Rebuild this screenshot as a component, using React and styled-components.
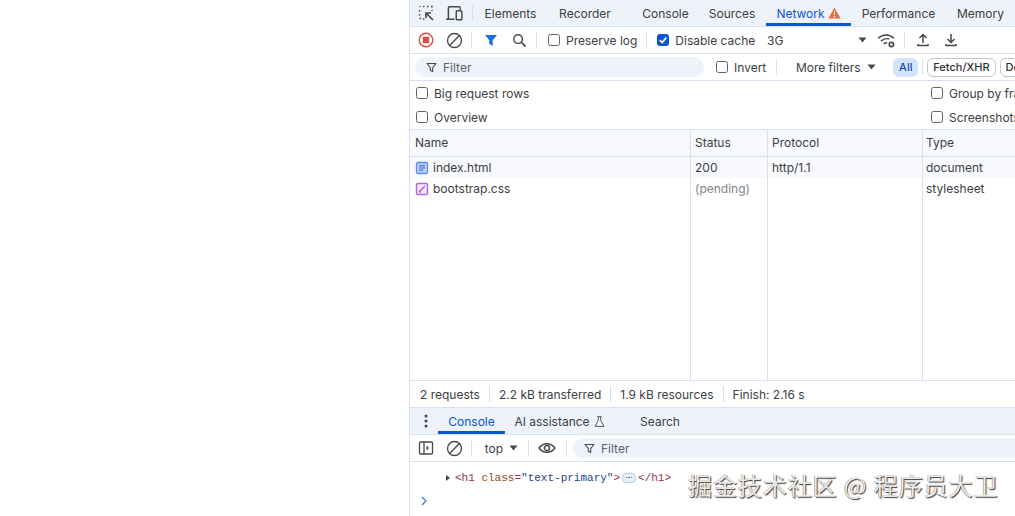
import styled, { createGlobalStyle } from 'styled-components';

const GlobalStyle = createGlobalStyle`
    html, body {
        margin: 0;
        padding: 0;
        height: 100%;
        background: #fff;
        overflow: hidden;
    }
    * {
        box-sizing: border-box;
    }
`;

const line = '#d6e0f0';
const tint = '#edf2fb';
const ink = '#3c4043';

const Page = styled.div`
    width: 1015px;
    height: 516px;
    display: flex;
    justify-content: flex-end;
    font-family: Inter, "Liberation Sans", sans-serif;
    font-size: 12px;
    color: ${ink};
    overflow: hidden;
    position: relative;
`;

const Devtools = styled.div`
    width: 606px;
    flex: none;
    height: 100%;
    border-left: 1px solid ${line};
    display: flex;
    flex-direction: column;
    overflow: hidden;
`;

const Bar = styled.div`
    flex: none;
    height: ${p => p.$h || 27}px;
    display: flex;
    align-items: center;
    background: ${p => p.$tint ? tint : '#fff'};
    border-bottom: 1px solid ${line};
    padding-left: ${p => p.$pad || 0}px;
    white-space: nowrap;
`;

const Tab = styled.div`
    flex: none;
    height: 100%;
    margin-left: ${p => p.$ml || 0}px;
    width: ${p => p.$w}px;
    display: flex;
    align-items: center;
    justify-content: center;
    gap: 3px;
    color: ${p => p.$active ? '#0b57d0' : ink};
    border-bottom: ${p => p.$active ? '3px solid #0b57d0' : '0'};
    padding-top: ${p => p.$active ? '3px' : '0'};
    border-radius: 0 0 1px 1px;
`;

const Sep = styled.div`
    flex: none;
    width: 1px;
    height: 16px;
    background: ${line};
    margin: 0 ${p => p.$m ?? 6}px 0 ${p => p.$ml ?? p.$m ?? 6}px;
`;

const IconSlot = styled.span`
    flex: none;
    width: 20px;
    height: 20px;
    margin-left: ${p => p.$ml || 0}px;
    display: flex;
    align-items: center;
    justify-content: center;
`;

const Check = styled.span`
    flex: none;
    width: 12px;
    height: 12px;
    border-radius: 2.5px;
    border: 1px solid ${p => p.$on ? '#0b57d0' : '#5f6368'};
    background: ${p => p.$on ? '#0b57d0' : '#fff'};
    display: flex;
    align-items: center;
    justify-content: center;
`;

const CheckLabel = styled.label`
    display: flex;
    align-items: center;
    gap: 6px;
    flex: none;
    margin-left: ${p => p.$ml || 0}px;
`;

const FilterPill = styled.div`
    flex: none;
    width: ${p => p.$w}px;
    height: 20px;
    margin-left: ${p => p.$ml}px;
    border-radius: ${p => p.$open ? '10px 0 0 10px' : '10px'};
    background: ${tint};
    display: flex;
    align-items: center;
    gap: ${p => p.$gap}px;
    padding-left: ${p => p.$pl}px;
    color: #5f6368;
`;

const Chip = styled.div`
    flex: none;
    height: 19px;
    width: ${p => p.$w ? `${p.$w}px` : 'auto'};
    padding: 0 5px;
    margin-left: ${p => p.$ml || 0}px;
    border-radius: 6px;
    display: flex;
    align-items: center;
    justify-content: center;
    font-size: 11px;
    font-weight: 500;
    border: 1px solid ${p => p.$on ? '#d3e3fd' : '#c4c7c5'};
    background: ${p => p.$on ? '#d3e3fd' : '#fff'};
    color: ${p => p.$on ? '#174ea6' : '#303134'};
`;

const Settings = styled.div`
    flex: none;
    height: 49px;
    display: grid;
    grid-template-columns: 521px 1fr;
    grid-template-rows: 24px 24px;
    align-items: center;
    padding: 0 0 0 6px;
    border-bottom: 1px solid ${line};
    white-space: nowrap;
`;

const Grid = styled.div`
    flex: 1;
    min-height: 0;
    display: grid;
    grid-template-columns: 281px 77px 155px 1fr;
    grid-template-rows: 27px 21px 21px 1fr;
    background: #fff;
`;

const Cell = styled.div`
    display: flex;
    align-items: center;
    gap: 4px;
    padding-left: ${p => p.$first ? 5 : p.$last ? 3 : 4}px;
    padding-bottom: ${p => p.$head ? 1 : 0}px;
    border-right: ${p => p.$last ? '0' : `1px solid ${line}`};
    background: ${p => p.$head ? '#f7f9fd' : p.$shade ? '#f8f9fc' : '#fff'};
    border-bottom: ${p => p.$head ? `1px solid ${line}` : '0'};
    color: ${p => p.$muted ? '#80868b' : ink};
    white-space: nowrap;
`;

const StatusBar = styled.div`
    flex: none;
    height: 28px;
    display: flex;
    align-items: center;
    border-top: 1px solid ${line};
    border-bottom: 1px solid ${line};
    padding-left: 10px;
    white-space: nowrap;
`;

const ConsoleBody = styled.div`
    flex: none;
    height: 54px;
    padding: 8px 0 0 36px;
`;

const LogLine = styled.div`
    display: flex;
    align-items: center;
    height: 15px;
    font-family: "Liberation Mono", monospace;
    font-size: 11px;
    white-space: pre;
    color: #8e2f4c;
`;

const Arrow = styled.span`
    width: 0;
    height: 0;
    margin-right: 5px;
    border-left: 4px solid #474747;
    border-top: 3.5px solid transparent;
    border-bottom: 3.5px solid transparent;
`;

const Attr = styled.span`
    color: ${p => p.$value ? '#1b3f8b' : '#8a4b1f'};
`;

const Dots = styled.span`
    width: 14px;
    height: 10px;
    margin: 0 2px 0 2px;
    border-radius: 4px;
    border: 1px solid #b9cce8;
    background: #e8effa;
    display: flex;
    align-items: center;
    justify-content: center;
    gap: 1px;

    i {
        width: 1.5px;
        height: 1.5px;
        background: #2f4f78;
        border-radius: 50%;
    }
`;

const Prompt = styled.div`
    margin: 9px 0 0 -26px;
    height: 14px;
    display: flex;
    align-items: center;
`;

const Watermark = styled.div`
    position: absolute;
    left: 688px;
    top: 469px;
    font-family: "Noto Sans CJK SC", sans-serif;
    font-size: 24px;
    line-height: 32px;
    letter-spacing: 0.92px;
    color: rgba(255, 255, 255, 0.9);
    text-shadow: 1px 1px 1px rgba(40, 40, 40, 0.9), -0.5px -0.5px 0.5px rgba(70, 70, 70, 0.7);
    white-space: nowrap;
`;

const Svg = ({ size = 16, children, ...rest }) => (
    <svg width={size} height={size} viewBox="0 0 16 16" fill="none" stroke="#474747" strokeWidth="1.3" {...rest}>
        {children}
    </svg>
);

const FunnelOutline = () => (
    <Svg size={13}>
        <path d="M2.5 3h11L9.5 8v5l-3-1.5V8z" strokeLinejoin="round" />
    </Svg>
);

const CheckBox = ({ on }) => (
    <Check $on={on}>
        {on && (
            <svg width="10" height="10" viewBox="0 0 10 10" fill="none" stroke="#fff" strokeWidth="1.7">
                <path d="M1.8 5.2 4.1 7.5 8.3 2.6" />
            </svg>
        )}
    </Check>
);

const Clear = () => (
    <Svg size={17}>
        <circle cx="8" cy="8" r="6.6" />
        <path d="M3.4 12.6 12.6 3.4" />
    </Svg>
);

const Caret = () => (
    <svg width="9" height="6" viewBox="0 0 9 6"><path d="M0.5 0.5h8L4.5 5.5z" fill="#474747" /></svg>
);

const App = () => {
    return (
        <Page>
            <GlobalStyle />
            <Devtools>
                <Bar $tint $pad={6}>
                    <IconSlot>
                        <Svg>
                            <path d="M1.5 1.5h1M5 1.5h1.5M9 1.5h1.500M13 1.500h1v1M1.500 5v1.500M1.500 9v1.500M14 5v1M1.500 13.500h1v.5M5 14h1.500" strokeWidth="1.400" />
                            <path d="M15 15 9 9M8 13V8h5" strokeWidth="1.700" />
                        </Svg>
                    </IconSlot>
                    <IconSlot $ml={8}>
                        <Svg size={18}>
                            <path d="M1 13.500h7.500M3 13V3.500a1 1 0 0 1 1-1h8.500a1 1 0 0 1 1 1V5" />
                            <rect x="10" y="6" width="5" height="8" rx="1" />
                        </Svg>
                    </IconSlot>
                    <Sep $ml={8} $m={0} />
                    <Tab $w={75}>Elements</Tab>
                    <Tab $w={80} $ml={-3}>Recorder</Tab>
                    <Tab $w={83} $ml={-1}>Console</Tab>
                    <Tab $w={50}>Sources</Tab>
                    <Tab $w={85} $ml={9} $active>
                        Network
                        <svg width="13" height="12" viewBox="0 0 13 12">
                            <path d="M6.500 0.500 12.700 11.500H0.300z" fill="#e8703a" />
                            <path d="M6.500 4v4M6.500 9v1.300" stroke="#fff" strokeWidth="1.100" />
                        </svg>
                    </Tab>
                    <Tab $w={75} $ml={10}>Performance</Tab>
                    <Tab $w={47} $ml={21}>Memory</Tab>
                </Bar>
                <Bar $pad={6}>
                    <IconSlot>
                        <svg width="16" height="16" viewBox="0 0 16 16">
                            <circle cx="8" cy="8" r="6.800" fill="none" stroke="#d9503f" strokeWidth="1.400" />
                            <rect x="4.800" y="4.800" width="6.400" height="6.400" rx="1" fill="#d9503f" />
                        </svg>
                    </IconSlot>
                    <IconSlot $ml={8}><Clear /></IconSlot>
                    <Sep $ml={7} $m={0} />
                    <IconSlot $ml={9}>
                        <svg width="14" height="14" viewBox="0 0 14 14"><path d="M1 2h12L8.700 7.300V13L5.300 10.800V7.300z" fill="#1a6fe0" /></svg>
                    </IconSlot>
                    <IconSlot $ml={8}>
                        <Svg size={15}>
                            <circle cx="6.500" cy="6.500" r="4.600" strokeWidth="1.500" />
                            <path d="M10 10l4.500 4.500" strokeWidth="1.700" />
                        </Svg>
                    </IconSlot>
                    <Sep $ml={7} $m={0} />
                    <CheckLabel $ml={11}><CheckBox />Preserve log</CheckLabel>
                    <Sep $ml={9} $m={0} />
                    <CheckLabel $ml={10}><CheckBox on />Disable cache</CheckLabel>
                    <Tab $w={16} $ml={12}>3G</Tab>
                    <IconSlot $ml={69}><Caret /></IconSlot>
                    <IconSlot $ml={4}>
                        <Svg size={18}>
                            <path d="M1 6.500C5 2.500 11 2.500 15 6.500M3.500 9C6 6.800 9 6.500 11 7.200M6 11.500C7 10.600 8 10.300 9 10.400" />
                            <circle cx="12.800" cy="12" r="1.900" strokeWidth="1.500" />
                        </Svg>
                    </IconSlot>
                    <Sep $ml={8} $m={0} />
                    <IconSlot $ml={8}>
                        <Svg>
                            <path d="M8 11V2.500M4.500 6 8 2.500 11.500 6M3 12v1.500h10V12" strokeWidth="1.500" />
                        </Svg>
                    </IconSlot>
                    <IconSlot $ml={8}>
                        <Svg>
                            <path d="M8 2v8.500M4.500 7 8 10.500 11.500 7M3 12v1.500h10V12" strokeWidth="1.500" />
                        </Svg>
                    </IconSlot>
                </Bar>
                <Bar>
                    <FilterPill $w={289} $ml={5} $pl={10} $gap={5}><FunnelOutline />Filter</FilterPill>
                    <CheckLabel $ml={12}><CheckBox />Invert</CheckLabel>
                    <Sep $ml={10} $m={0} />
                    <Tab $w={70} $ml={16}>More filters</Tab>
                    <IconSlot $ml={-2}><Caret /></IconSlot>
                    <Chip $on $ml={12} $w={25}>All</Chip>
                    <Sep $ml={4} $m={4} />
                    <Chip>Fetch/XHR</Chip>
                    <Chip $ml={4}>Doc</Chip>
                </Bar>
                <Settings>
                    <CheckLabel><CheckBox />Big request rows</CheckLabel>
                    <CheckLabel $ml={-6}><CheckBox />Group by frame</CheckLabel>
                    <CheckLabel><CheckBox />Overview</CheckLabel>
                    <CheckLabel $ml={-6}><CheckBox />Screenshots</CheckLabel>
                </Settings>
                <Grid>
                    <Cell $head $first>Name</Cell>
                    <Cell $head>Status</Cell>
                    <Cell $head>Protocol</Cell>
                    <Cell $head $last>Type</Cell>

                    <Cell $shade $first>
                        <svg width="14" height="14" viewBox="0 0 14 14" fill="none">
                            <rect x="1.500" y="1.500" width="11" height="11" rx="1.500" fill="#bcd2fb" stroke="#5c8df0" strokeWidth="1.300" />
                            <path d="M4 4.800h6M4 7h6M4 9.200h4" stroke="#2f62d0" strokeWidth="1" />
                        </svg>
                        index.html
                    </Cell>
                    <Cell $shade>200</Cell>
                    <Cell $shade>http/1.1</Cell>
                    <Cell $shade $last>document</Cell>

                    <Cell $first>
                        <svg width="14" height="14" viewBox="0 0 14 14" fill="none">
                            <rect x="1.500" y="1.500" width="11" height="11" rx="1.500" fill="#f6ecfd" stroke="#b267e6" strokeWidth="1.500" />
                            <path d="M4 10 10 4M4.500 8.500v1.500h1.500" stroke="#a34fdc" strokeWidth="1.200" />
                        </svg>
                        bootstrap.css
                    </Cell>
                    <Cell $muted>(pending)</Cell>
                    <Cell />
                    <Cell $last>stylesheet</Cell>

                    <Cell />
                    <Cell />
                    <Cell />
                    <Cell $last />
                </Grid>
                <StatusBar>
                    2 requests
                    <Sep $m={9} />
                    2.2 kB transferred
                    <Sep $m={9} />
                    1.9 kB resources
                    <Sep $m={9} />
                    Finish: 2.16 s
                </StatusBar>
                <Bar $tint>
                    <IconSlot $ml={6}>
                        <svg width="4" height="14" viewBox="0 0 4 14" fill="#474747">
                            <circle cx="2" cy="2" r="1.500" /><circle cx="2" cy="7" r="1.500" /><circle cx="2" cy="12" r="1.500" />
                        </svg>
                    </IconSlot>
                    <Tab $w={67} $ml={2} $active>Console</Tab>
                    <Tab $w={92} $ml={9}>
                        AI assistance
                        <Svg size={13} strokeWidth="1.100">
                            <path d="M5.500 2h5M6.500 2v4.500L2.500 14h11L9.500 6.500V2" />
                        </Svg>
                    </Tab>
                    <Tab $w={42} $ml={33}>Search</Tab>
                </Bar>
                <Bar $pad={6}>
                    <IconSlot>
                        <Svg>
                            <rect x="1.500" y="2" width="13" height="12" rx="1" />
                            <path d="M6 2v12" />
                            <path d="M8.500 5.500 11 8l-2.500 2.500z" fill="#474747" stroke="none" />
                        </Svg>
                    </IconSlot>
                    <IconSlot $ml={8}><Clear /></IconSlot>
                    <Sep $ml={7} $m={0} />
                    <Tab $w={20} $ml={12}>top</Tab>
                    <IconSlot $ml={-1}><Caret /></IconSlot>
                    <Sep $ml={5} $m={0} />
                    <IconSlot $ml={8}>
                        <Svg size={18}>
                            <path d="M1 8C4.500 3 11.500 3 15 8 11.500 13 4.500 13 1 8z" />
                            <circle cx="8" cy="8" r="2.300" />
                        </Svg>
                    </IconSlot>
                    <Sep $ml={9} $m={0} />
                    <FilterPill $w={442} $ml={6} $pl={10} $gap={5} $open>
                        <FunnelOutline />Filter
                    </FilterPill>
                </Bar>
                <ConsoleBody>
                    <LogLine>
                        <Arrow />
                        {'<h1 '}<Attr>class</Attr>=<Attr $value>"text-primary"</Attr>{'>'}
                        <Dots><i /><i /><i /></Dots>
                        {'</h1>'}
                    </LogLine>
                    <Prompt>
                        <svg width="8" height="10" viewBox="0 0 8 10" fill="none" stroke="#3b78e7" strokeWidth="1.300">
                            <path d="M2 1l4 4-4 4" />
                        </svg>
                    </Prompt>
                </ConsoleBody>
            </Devtools>
            <Watermark>掘金技术社区 @ 程序员大卫</Watermark>
        </Page>
    );
};

export default App;
